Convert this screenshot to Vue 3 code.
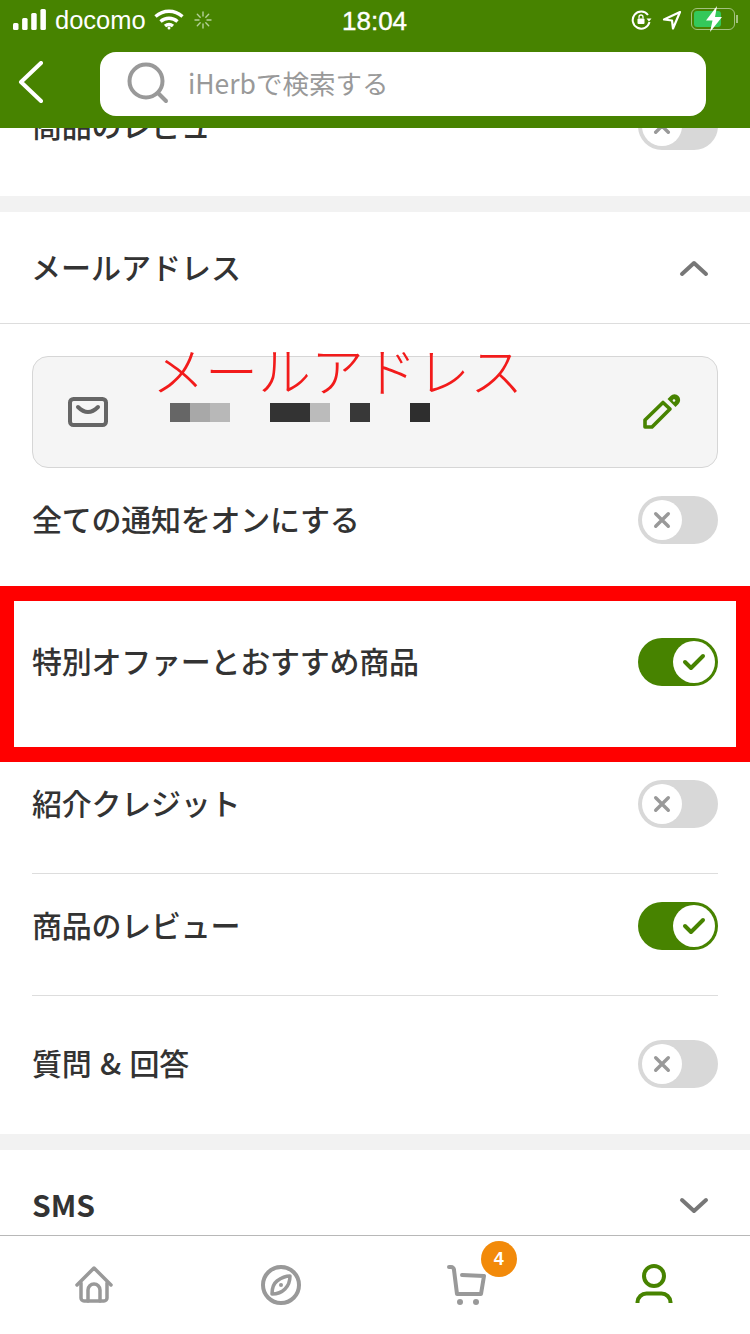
<template>
  <div class="page">
    <header class="top">
      <div class="status">
        <div class="status-left">
          <svg class="signal" width="33" height="22" viewBox="0 0 33 22">
            <rect x="0" y="14" width="5.500" height="7" rx="1.500" />
            <rect x="9.100" y="9" width="5.500" height="12" rx="1.500" />
            <rect x="18.200" y="4" width="5.500" height="17" rx="1.500" />
            <rect x="27.400" y="0" width="5.500" height="21" rx="1.500" />
          </svg>
          <span class="carrier">docomo</span>
          <svg width="30" height="22" viewBox="0 0 30 22" fill="none" stroke="#fff" stroke-width="3.400">
            <path d="M1.500 7.500c8-7 19-7 27 0" />
            <path d="M6.500 12.500c5-4.400 12-4.400 17 0" />
            <path d="M11 17c2.500-2 5.500-2 8 0" />
            <circle cx="15" cy="19" r="1.500" fill="#fff" stroke="none" />
          </svg>
          <svg class="spinner" width="18" height="18" viewBox="0 0 18 18" stroke="#cfe3bf" stroke-width="1.400" stroke-linecap="round" stroke-opacity="0.8">
            <path d="M9 1v4M9 13v4M1 9h4M13 9h4M3.300 3.300l2.900 2.900M11.800 11.800l2.900 2.900M14.700 3.300l-2.900 2.900M6.200 11.800l-2.900 2.900" />
          </svg>
        </div>
        <span class="time">18:04</span>
        <div class="status-right">
          <svg width="22" height="20" viewBox="0 0 22 20" fill="none" stroke="#fff" stroke-width="2">
            <path d="M18.500 12a8.500 8.500 0 1 1-1.500-7" />
            <path d="M15.500 8.500h5l-2.500 3z" fill="#fff" stroke="none" />
            <rect x="6.500" y="8.500" width="7" height="5.500" rx="1" fill="#fff" stroke="none" />
            <path d="M8 8.500v-1.500a2 2 0 0 1 4 0v1.500" stroke-width="1.300" />
          </svg>
          <svg class="arrow" width="20" height="20" viewBox="0 0 20 20" fill="none" stroke="#fff" stroke-width="2.200" stroke-linejoin="round">
            <path d="M18 2L2 9.500l8 1 1 8z" />
          </svg>
          <div class="battery">
            <div class="battery-fill"></div>
            <svg class="bolt" width="20" height="26" viewBox="0 0 20 26">
              <path d="M13 0L2 14.500h6.500L6 26l12-15h-7z" fill="#fff" />
            </svg>
          </div>
          <div class="battery-nub"></div>
        </div>
      </div>
      <div class="toolbar">
        <svg class="back" width="26" height="42" viewBox="0 0 26 42" fill="none" stroke="#fff" stroke-width="4" stroke-linecap="round" stroke-linejoin="round">
          <path d="M23 2L3 21l20 19" />
        </svg>
        <div class="search">
          <svg width="44" height="44" viewBox="0 0 44 44" fill="none" stroke="#999" stroke-width="4" stroke-linecap="round">
            <circle cx="20" cy="19" r="16.500" />
            <path d="M32 31l8 8" />
          </svg>
          <span class="placeholder">iHerbで検索する</span>
        </div>
      </div>
    </header>

    <main class="content">
      <section class="group">
        <div class="row row-clipped">
          <span>商品のレビュー</span>
          <div class="toggle">
            <span class="knob">
              <svg width="18" height="18" viewBox="0 0 20 20" fill="none" stroke="#999" stroke-width="3.800" stroke-linecap="round">
                <path d="M3 3l14 14M17 3L3 17" />
              </svg>
            </span>
          </div>
        </div>
      </section>

      <section class="group group-email">
        <div class="group-head">
          <span>メールアドレス</span>
          <svg width="32" height="20" viewBox="0 0 32 20" fill="none" stroke="#777" stroke-width="4" stroke-linecap="round" stroke-linejoin="round">
            <path d="M4 16L16 5l12 11" />
          </svg>
        </div>
        <div class="email-wrap">
          <div class="email-box">
            <span class="red-label">メールアドレス</span>
            <svg width="40" height="30" viewBox="0 0 40 30" fill="none" stroke="#666" stroke-width="4" stroke-linecap="round" stroke-linejoin="round">
              <rect x="2" y="2" width="36" height="26" rx="3.500" />
              <path d="M10 10c3 3 6 5 10 5s7-2 10-5" />
            </svg>
            <div class="masked">
              <i v-for="(c, i) in maskCells" :key="i" :style="{ background: c }"></i>
            </div>
            <svg class="pencil" width="40" height="40" viewBox="0 0 40 40" fill="none" stroke="#478300" stroke-width="3.600" stroke-linejoin="round">
              <path d="M3 35v-7L21 10.500l7 6.500L10 35z" />
              <path d="M25.500 7l3-3a5.500 5.500 0 0 1 8 8l-3 3z" fill="#478300" stroke="none" />
              <circle cx="32" cy="8.500" r="1.300" fill="#f5f5f5" stroke="none" />
            </svg>
          </div>
          <div class="row row-open">
            <span>全ての通知をオンにする</span>
            <div class="toggle">
              <span class="knob">
                <svg width="18" height="18" viewBox="0 0 20 20" fill="none" stroke="#999" stroke-width="3.800" stroke-linecap="round">
                  <path d="M3 3l14 14M17 3L3 17" />
                </svg>
              </span>
            </div>
          </div>
        </div>
        <div class="highlight">
          <div class="row row-highlight">
            <span>特別オファーとおすすめ商品</span>
            <div class="toggle on">
              <span class="knob">
                <svg width="26" height="22" viewBox="0 0 26 22" fill="none" stroke="#478300" stroke-width="4" stroke-linecap="round" stroke-linejoin="round">
                  <path d="M4 11l6 6L22 5" />
                </svg>
              </span>
            </div>
          </div>
        </div>
        <div class="email-wrap">
          <div class="row row-divided row-first">
            <span>紹介クレジット</span>
            <div class="toggle">
              <span class="knob">
                <svg width="18" height="18" viewBox="0 0 20 20" fill="none" stroke="#999" stroke-width="3.800" stroke-linecap="round">
                  <path d="M3 3l14 14M17 3L3 17" />
                </svg>
              </span>
            </div>
          </div>
          <div class="row row-divided">
            <span>商品のレビュー</span>
            <div class="toggle on">
              <span class="knob">
                <svg width="26" height="22" viewBox="0 0 26 22" fill="none" stroke="#478300" stroke-width="4" stroke-linecap="round" stroke-linejoin="round">
                  <path d="M4 11l6 6L22 5" />
                </svg>
              </span>
            </div>
          </div>
          <div class="row row-last">
            <span class="qa">質問 &amp; 回答</span>
            <div class="toggle">
              <span class="knob">
                <svg width="18" height="18" viewBox="0 0 20 20" fill="none" stroke="#999" stroke-width="3.800" stroke-linecap="round">
                  <path d="M3 3l14 14M17 3L3 17" />
                </svg>
              </span>
            </div>
          </div>
        </div>
      </section>

      <section class="group group-sms">
        <div class="group-head no-line">
          <span class="sms">SMS</span>
          <svg width="32" height="20" viewBox="0 0 32 20" fill="none" stroke="#777" stroke-width="4" stroke-linecap="round" stroke-linejoin="round">
            <path d="M4 4l12 11L28 4" />
          </svg>
        </div>
      </section>
    </main>

    <nav class="tabs">
      <div class="tab">
        <svg width="40" height="40" viewBox="0 0 40 40" fill="none" stroke="#999" stroke-width="3.500" stroke-linecap="round" stroke-linejoin="round">
          <path d="M3 20L20 3l17 17" />
          <path d="M7 18v15a3 3 0 0 0 3 3h20a3 3 0 0 0 3-3V18" />
          <path d="M14 36V25a6 6 0 0 1 12 0v11" />
        </svg>
      </div>
      <div class="tab">
        <svg width="40" height="40" viewBox="0 0 40 40" fill="none" stroke="#999" stroke-width="4">
          <circle cx="20" cy="20" r="18" />
          <path d="M29 11c0 5-1 9-5 13s-8 5-13 5c0-6 1-10 5-13s8-5 13-5z" stroke-width="3.500" stroke-linejoin="round" />
          <circle cx="20" cy="20" r="2" fill="#999" stroke="none" />
        </svg>
      </div>
      <div class="tab tab-shift">
        <div class="cart">
          <svg width="40" height="40" viewBox="0 0 40 40" fill="none" stroke="#999" stroke-width="4" stroke-linecap="round" stroke-linejoin="round">
            <path d="M2 2h2a3 3 0 0 1 3 3l3 24h24l3-18-22-1" />
            <circle cx="13" cy="37" r="3" fill="#999" stroke="none" />
            <circle cx="29" cy="37" r="3" fill="#999" stroke="none" />
          </svg>
          <span class="badge">4</span>
        </div>
      </div>
      <div class="tab tab-shift tab-user">
        <svg width="40" height="42" viewBox="0 0 40 42" fill="none" stroke="#478300" stroke-width="4">
          <circle cx="20" cy="12" r="10" />
          <path d="M3.500 39v-1a9 9 0 0 1 9-8.500h15a9 9 0 0 1 9 8.500v1" />
        </svg>
      </div>
    </nav>
  </div>
</template>

<script setup>
// pixelated block standing in for the hidden address
const maskCells = [
  '#666', '#a8a8a8', '#b8b8b8', 'transparent', 'transparent',
  '#333', '#333', '#bbb', 'transparent', '#383838',
  'transparent', 'transparent', '#2e2e2e',
]
</script>

<style>
html, body {
  margin: 0;
  background: #fff;
}
</style>

<style scoped>
.page {
  width: 750px;
  height: 1334px;
  display: flex;
  flex-direction: column;
  overflow: hidden;
  background: #fff;
  color: #333;
  font-family: "Noto Sans CJK JP", "Liberation Sans", sans-serif;
}

.top {
  height: 128px;
  flex: none;
  background: #478300;
}

.status {
  height: 40px;
  position: relative;
  display: flex;
  align-items: center;
  justify-content: space-between;
  padding: 0 12px 0 13px;
  color: #fff;
  font-family: "Liberation Sans", sans-serif;
}

.status-left {
  display: flex;
  align-items: center;
}

.signal {
  fill: #fff;
  margin-right: 9px;
}

.carrier {
  font-size: 25.500px;
  margin-right: 8px;
}

.spinner {
  margin-left: 10px;
}

.time {
  position: absolute;
  left: 342px;
  top: 6px;
  font-size: 26px;
  line-height: 30px;
  font-weight: 500;
  -webkit-text-stroke: 0.4px #fff;
}

.status-right {
  display: flex;
  align-items: center;
}

.arrow {
  margin: 0 9px 0 9px;
}

.battery {
  width: 44px;
  height: 22px;
  box-sizing: border-box;
  border: 1.500px solid rgba(255, 255, 255, 0.5);
  border-radius: 6px;
  padding: 2px;
  position: relative;
  margin-top: -2px;
}

.battery-fill {
  width: 27px;
  height: 100%;
  background: #34c85a;
  border-radius: 3px;
}

.bolt {
  position: absolute;
  left: 12px;
  top: -3px;
}

.battery-nub {
  width: 2px;
  height: 8px;
  margin-left: 1px;
  margin-top: -2px;
  background: rgba(255, 255, 255, 0.5);
}

.toolbar {
  height: 88px;
  display: flex;
  align-items: flex-start;
  padding: 12px 44px 0 18px;
}

.back {
  margin-top: 9px;
  flex: none;
}

.search {
  width: 606px;
  height: 64px;
  margin-left: 56px;
  background: #fff;
  border-radius: 16px;
  display: flex;
  align-items: center;
  padding-left: 26px;
  box-sizing: border-box;
}

.placeholder {
  margin: 0 0 4px 18px;
  font-size: 26.500px;
  color: #999;
}

.content {
  flex: 1;
  min-height: 0;
  overflow: hidden;
}

.group {
  background: #fff;
}

.group-email {
  border-top: 16px solid #f2f2f2;
}

.group-sms {
  border-top: 16px solid #f2f2f2;
}

.group-head {
  height: 111px;
  padding: 0 40px 0 31px;
  display: flex;
  align-items: center;
  justify-content: space-between;
  border-bottom: 1px solid #ddd;
  font-size: 30px;
  font-weight: 500;
}

.group-head > span {
  margin-bottom: 4px;
}

.group-head.no-line {
  border-bottom: 0;
}

.sms {
  font-weight: 700;
  margin-left: 1px;
}

.email-wrap {
  padding: 0 32px;
}

.email-box {
  position: relative;
  margin-top: 32px;
  height: 112px;
  box-sizing: border-box;
  background: #f5f5f5;
  border: 1px solid #d6d6d6;
  border-radius: 16px;
  display: flex;
  align-items: center;
  padding: 0 35px;
}

.red-label {
  position: absolute;
  left: 119px;
  top: -26px;
  font-size: 53px;
  line-height: 76px;
  font-weight: 300;
  color: #f21b1b;
  white-space: nowrap;
}

.masked {
  display: flex;
  margin-left: 62px;
}

.masked i {
  display: block;
  width: 20px;
  height: 19px;
}

.pencil {
  margin-left: auto;
}

.row {
  display: flex;
  align-items: center;
  justify-content: space-between;
  font-size: 30px;
  font-weight: 500;
  letter-spacing: -0.25px;
}

.row > span {
  margin-bottom: 4px;
}

.qa {
  word-spacing: 2px;
}

.row-clipped {
  margin-top: -26px;
  padding: 0 32px 46px;
}

.row-open {
  padding: 28px 0 42px;
}

.highlight {
  border: 15px solid #ff0000;
  border-left-width: 14px;
  border-right-width: 14px;
}

.row-highlight {
  padding: 37px 18px 61px;
}

.row-divided {
  padding: 28px 0 45px;
  border-bottom: 1px solid #ddd;
}

.row-first {
  padding-top: 18px;
}

.row-last {
  padding: 44px 0 46px;
}

.toggle {
  width: 80px;
  height: 48px;
  flex: none;
  box-sizing: border-box;
  background: #d8d8d8;
  border-radius: 24px;
  padding: 4px;
  display: flex;
  justify-content: flex-start;
}

.toggle.on {
  background: #478300;
  justify-content: flex-end;
  padding: 3px;
}

.knob {
  width: 40px;
  height: 40px;
  background: #fff;
  border-radius: 50%;
  display: flex;
  align-items: center;
  justify-content: center;
}

.toggle.on .knob {
  width: 42px;
  height: 42px;
}

.tabs {
  height: 99px;
  flex: none;
  box-sizing: border-box;
  border-top: 1px solid #b8b8b8;
  display: grid;
  grid-template-columns: repeat(4, 1fr);
  background: #fff;
}

.tab {
  display: flex;
  justify-content: center;
  padding-top: 29px;
}

.tab-shift {
  padding-right: 4px;
}

.tab-user {
  padding-top: 28px;
}

.cart {
  position: relative;
  height: 40px;
}

.badge {
  position: absolute;
  left: 34px;
  top: -24px;
  width: 36px;
  height: 36px;
  border-radius: 50%;
  background: #f28a0a;
  color: #fff;
  font-size: 18px;
  font-weight: 700;
  font-family: "Liberation Sans", sans-serif;
  display: flex;
  align-items: center;
  justify-content: center;
}
</style>
